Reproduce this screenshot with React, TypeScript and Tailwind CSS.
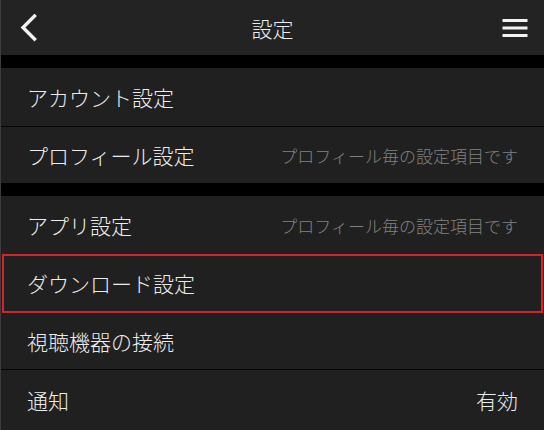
import React from "react";

const font = { fontFamily: '"Noto Sans CJK JP", "Noto Sans", sans-serif' };

function Row({
  label,
  right,
  rightKind = "sub",
  h,
  border = false,
  highlight = false,
}: {
  label: string;
  right?: string;
  rightKind?: "sub" | "value";
  h: string;
  border?: boolean;
  highlight?: boolean;
}) {
  return (
    <div
      className={`relative flex items-center justify-between bg-[#202020] pl-[26px] pr-[26px] ${h} ${
        border ? "border-b border-[#050505]" : ""
      }`}
    >
      <span className="text-[21px] font-light leading-none text-[#ececec]">{label}</span>
      {right ? (
        rightKind === "sub" ? (
          <span className="text-[17px] font-light leading-none text-[#808080]">{right}</span>
        ) : (
          <span className="text-[21px] font-light leading-none text-[#ececec]">{right}</span>
        )
      ) : null}
      {highlight ? (
        <div className="pointer-events-none absolute inset-y-0 left-[1px] right-[1px] border-2 border-[#d4232c]" />
      ) : null}
    </div>
  );
}

export default function App() {
  return (
    <div
      className="w-[544px] h-[430px] overflow-hidden bg-black border-l border-[#3c3c3c] flex flex-col"
      style={font}
    >
      <div className="relative h-[55px] shrink-0 bg-[#232323] flex items-center justify-between pl-[19px] pr-[16px]">
        <svg width="18" height="28" viewBox="0 0 18 28" className="shrink-0">
          <path
            d="M14.5 2 L3 13.5 L14.5 25"
            fill="none"
            stroke="#f2f2f2"
            strokeWidth="3.4"
            strokeLinecap="square"
            strokeLinejoin="miter"
          />
        </svg>
        <span className="absolute left-1/2 top-1/2 -translate-x-1/2 -translate-y-1/2 text-[21px] font-light leading-none text-[#ececec]">
          設定
        </span>
        <svg width="26" height="20" viewBox="0 0 26 20" className="shrink-0">
          <rect x="0.5" y="1" width="25" height="3" fill="#f2f2f2" />
          <rect x="0.5" y="8.5" width="25" height="3" fill="#f2f2f2" />
          <rect x="0.5" y="16" width="25" height="3" fill="#f2f2f2" />
        </svg>
      </div>
      <div className="h-[13px] shrink-0 bg-black" />
      <Row label="アカウント設定" h="h-[59px]" border />
      <Row label="プロフィール設定" right="プロフィール毎の設定項目です" h="h-[56px]" />
      <div className="h-[13px] shrink-0 bg-black" />
      <Row label="アプリ設定" right="プロフィール毎の設定項目です" h="h-[58px]" />
      <Row label="ダウンロード設定" h="h-[59px]" highlight />
      <Row label="視聴機器の接続" h="h-[57px]" border />
      <Row label="通知" right="有効" rightKind="value" h="h-[60px]" />
    </div>
  );
}
